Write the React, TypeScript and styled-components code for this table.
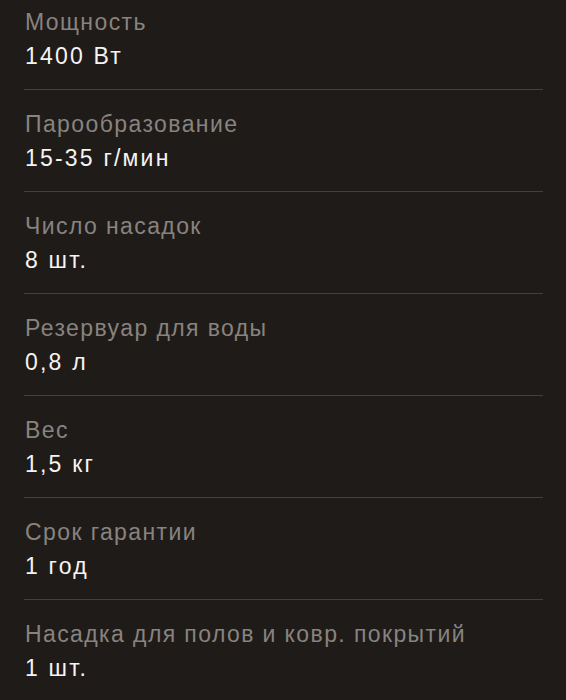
import styled, { createGlobalStyle } from 'styled-components';

const GlobalStyle = createGlobalStyle`
  html, body {
    margin: 0;
    padding: 0;
    background: #1f1b19;
  }
  body {
    font-family: "Liberation Sans", Arial, sans-serif;
  }
`

const Page = styled.div`
  min-height: 700px;
  background: #1f1b19;
  padding: 0 23px 0 24px;
  box-sizing: border-box;
`

const SpecRow = styled.div<{ $first?: boolean; $last?: boolean }>`
  display: flex;
  flex-direction: column;
  padding: ${(p) => (p.$first ? '5px' : '17px')} 0 16px;
  border-bottom: ${(p) => (p.$last ? 'none' : '1px solid #45403d')};
`

const SpecLabel = styled.div`
  font-size: 23px;
  line-height: 34px;
  letter-spacing: 1.4px;
  color: #88837f;
  padding-left: 1px;
`

const SpecValue = styled.div`
  font-size: 23px;
  line-height: 34px;
  letter-spacing: 2.2px;
  color: #f6f4f2;
  padding-left: 1px;
`

const specs = [
  ['Мощность', '1400 Вт'],
  ['Парообразование', '15-35 г/мин'],
  ['Число насадок', '8 шт.'],
  ['Резервуар для воды', '0,8 л'],
  ['Вес', '1,5 кг'],
  ['Срок гарантии', '1 год'],
  ['Насадка для полов и ковр. покрытий', '1 шт.'],
]

const App = () => {
  return (
    <>
      <GlobalStyle />
      <Page>
        {specs.map(([label, value], index) => (
          <SpecRow key={label} $first={index === 0} $last={index === specs.length - 1}>
            <SpecLabel>{label}</SpecLabel>
            <SpecValue>{value}</SpecValue>
          </SpecRow>
        ))}
      </Page>
    </>
  )
}

export default App;
